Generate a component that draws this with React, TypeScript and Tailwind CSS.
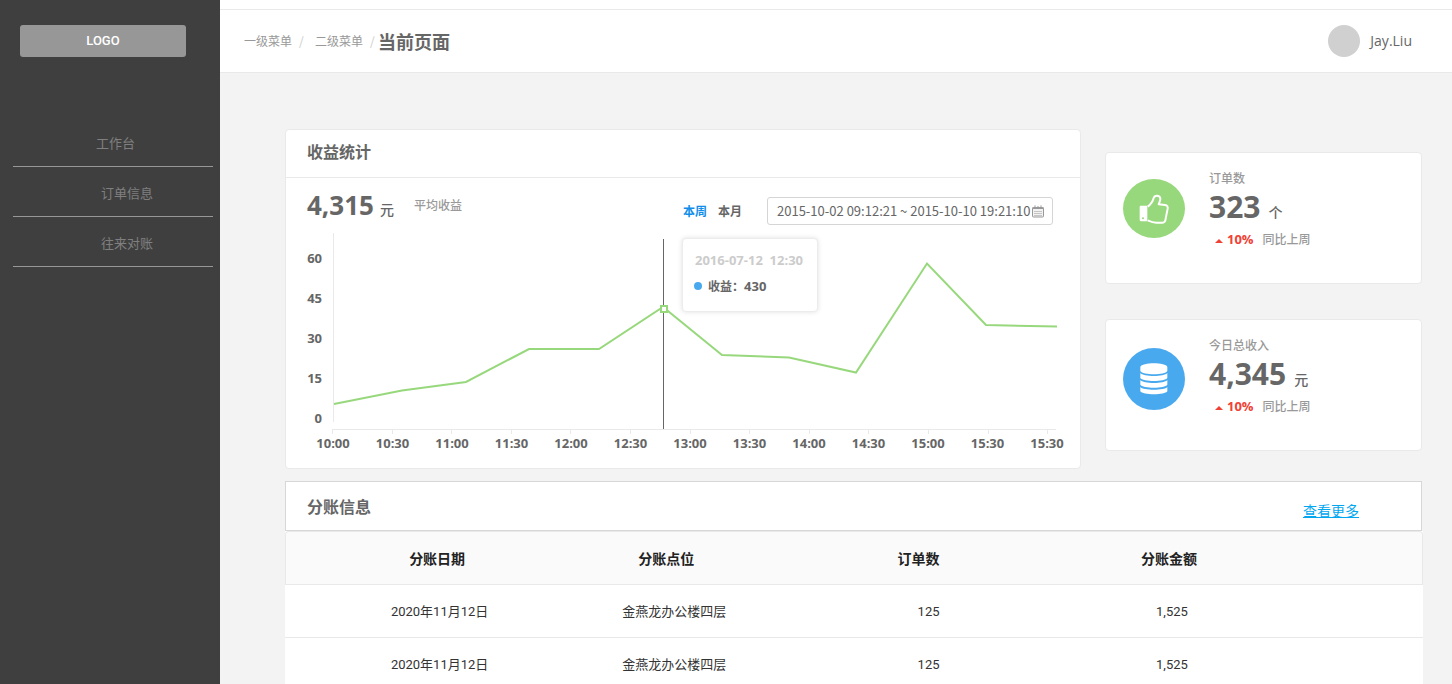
import type { ReactNode } from 'react'
import clsx from 'clsx'

const menuItems = [
  { label: '工作台', indent: 'pl-[83px]' },
  { label: '订单信息', indent: 'pl-[88px]' },
  { label: '往来对账', indent: 'pl-[88px]' },
]

const yLabels = ['60', '45', '30', '15', '0']

const xLabels = ['10:00', '10:30', '11:00', '11:30', '12:00', '12:30', '13:00', '13:30', '14:00', '14:30', '15:00', '15:30', '15:30']

const linePoints = '2,171 70,157.5 134,149 197,116 267,116 331,74 390,122 457,124.5 524,139.5 595,30.5 654,92 725,93.5'

const rows = [
  { date: '2020年11月12日', place: '金燕龙办公楼四层', orders: '125', amount: '1,525' },
  { date: '2020年11月12日', place: '金燕龙办公楼四层', orders: '125', amount: '1,525' },
]

function ThumbIcon() {
  return (
    <svg viewBox="130 160 90 90" className="size-[30px]" aria-hidden="true">
      <path d="M135 195h20v47h-18q-5 0-5-5v-38q0-4 3-4z" fill="#fff" />
      <circle cx="142" cy="233" r="3" fill="#98d87d" />
      <path
        d="M156 198C166 191 171 183 174 172C177 162 192 163 194 173C195 179 191 185 189 191L208 193C215 194 217 198 216 204L209 239C208 244 205 246 199 246L182 246C172 246 165 243 156 239"
        fill="none"
        stroke="#fff"
        strokeWidth="6"
        strokeLinejoin="round"
      />
    </svg>
  )
}

function CoinsIcon() {
  return (
    <svg viewBox="137 158 84 96" className="h-8 w-7" fill="#fff" aria-hidden="true">
      <path d="M138 170C142 155 215 155 219 170V182C212 195 145 195 138 182Z" />
      <path d="M138 188C147 200 210 200 219 188V203C212 215 145 215 138 203Z" />
      <path d="M138 209C147 221 210 221 219 209V223C212 235 145 235 138 223Z" />
      <path d="M138 230C147 241 210 241 219 230V243C212 255 145 255 138 243Z" />
    </svg>
  )
}

function CalendarIcon() {
  return (
    <svg viewBox="0 0 12 13" className="h-[13px] w-3 shrink-0" aria-hidden="true">
      <rect x="0.5" y="2.5" width="11" height="9.5" rx="0.8" fill="#f2f2f2" stroke="#999" />
      <path d="M0.5 3.2h11" stroke="#999" strokeWidth="1.6" />
      <path d="M3 0.4v3M6 1v2M9 0.4v3" stroke="#999" />
      <path d="M2.5 6.5h7.4M2.5 8.5h7.4M2.5 10.5h7.4" stroke="#999" strokeDasharray="1 1" />
    </svg>
  )
}

function Sidebar() {
  return (
    <aside className="w-[220px] shrink-0 bg-[#3f3f3f]">
      <div className="mt-[25px] ml-5 flex h-8 w-[166px] items-center justify-center rounded-[3px] bg-[#979797] font-[Roboto] text-[13px] font-medium text-white">
        LOGO
      </div>
      <nav className="mt-[60px] mr-[7px] ml-[13px]">
        {menuItems.map((item) => (
          <a
            key={item.label}
            href="#"
            className={clsx('flex h-[50px] items-center border-b border-[#979797] pt-[2px] text-[13px] text-[#7f7f7f]', item.indent)}
          >
            {item.label}
          </a>
        ))}
      </nav>
    </aside>
  )
}

function Header() {
  return (
    <header className="border-b border-[#e9e9e9] bg-white pt-[9px]">
      <div className="box-content flex h-[62px] items-center justify-between border-t border-[#e9e9e9] pr-10 pl-6">
        <div className="flex items-center text-xs text-[#999]">
          <a href="#">一级菜单</a>
          <span className="w-[23px] pl-[7px] text-[#ccc]">/</span>
          <a href="#">二级菜单</a>
          <span className="w-[15px] pl-[7px] text-[#ccc]">/</span>
          <h1 className="text-lg font-bold text-[#666]">当前页面</h1>
        </div>
        <div className="flex items-center gap-[10px]">
          <div className="size-8 rounded-full bg-[#d0d0d0]" />
          <span className="font-['Open_Sans'] text-sm text-[#666]">Jay.Liu</span>
        </div>
      </div>
    </header>
  )
}

function Chart() {
  return (
    <div className="mt-2 pb-4">
      <div className="flex h-[201px] pr-[23px] pl-[21px]">
        <div className="w-[15px] pt-[5px] text-right font-['Open_Sans'] text-[13px] font-bold">
          {yLabels.map((label) => (
            <div key={label} className="h-10 leading-10">{label}</div>
          ))}
        </div>
        <div className="relative ml-[10px] grow">
          <svg viewBox="0 0 725 201" preserveAspectRatio="none" className="h-full w-full" aria-hidden="true">
            <path d="M1.5 0V189M0 196.5H724" stroke="#e9e9e9" fill="none" />
            {xLabels.map((_, i) => (
              <path key={i} d={`M${Math.round(i * 59.6) + 0.5} 197v4`} stroke="#e9e9e9" />
            ))}
            <path d="M331.5 6V196" stroke="#666" />
            <polyline points={linePoints} fill="none" stroke="#98d87d" strokeWidth="2" />
            <rect x="329" y="73" width="6" height="6" fill="#fff" stroke="#98d87d" strokeWidth="2" />
          </svg>
          {/* Tooltip */}
          <div className="absolute top-[5px] left-[350px] h-[74px] w-[136px] rounded-[4px] border border-[#ececec] bg-white pt-[11px] pl-3 text-[13px] font-bold shadow-[0_0_5px_rgba(0,0,0,0.12)]">
            <div className="font-['Open_Sans'] leading-5 whitespace-pre text-[#ccc]">2016-07-12  12:30</div>
            <div className="mt-1 flex items-center leading-6">
              <span className="-ml-px mr-[6px] size-2 rounded-full bg-[#49a9ee]" />
              <span className="text-xs">收益：</span>
              <span className="font-['Open_Sans']">430</span>
            </div>
          </div>
        </div>
      </div>
      <div className="mr-[13px] ml-[27px] flex h-[18px] justify-between font-['Open_Sans'] text-[13px] leading-[18px] font-bold">
        {xLabels.map((label, i) => (
          <span key={i} className="w-10 text-center">{label}</span>
        ))}
      </div>
    </div>
  )
}

function RevenueCard() {
  return (
    <section className="grow rounded-[4px] border border-[#e9e9e9] bg-white text-[#666]">
      <h2 className="h-12 border-b border-[#e9e9e9] px-[21px] text-base leading-[42px] font-bold">收益统计</h2>
      <div className="mt-[19px] flex h-7 items-center pr-[27px] pl-[21px]">
        <div className="-mt-3 flex items-baseline font-['Open_Sans','Noto_Sans_CJK_SC',sans-serif]">
          <span className="text-[26px] leading-8 font-bold">4,315</span>
          <span className="ml-[6px] text-sm font-medium">元</span>
        </div>
        <span className="-mt-3 ml-5 text-xs font-medium text-[#999]">平均收益</span>
        <div className="ml-auto flex gap-[11px] text-xs font-bold">
          <button type="button" className="text-[#108ee9]">本周</button>
          <button type="button">本月</button>
        </div>
        <label className="ml-[25px] flex h-7 w-[286px] items-center rounded-[3px] border border-[#d5d5d5] pr-2 pl-[9px]">
          <input
            type="text"
            aria-label="日期范围"
            readOnly
            value="2015-10-02 09:12:21 ~ 2015-10-10 19:21:10"
            className="min-w-0 grow bg-transparent text-[13px] outline-none"
          />
          <CalendarIcon />
        </label>
      </div>
      <Chart />
    </section>
  )
}

type StatCardProps = {
  icon: ReactNode
  iconClass: string
  label: string
  value: string
  unit: string
}

function StatCard({ icon, iconClass, label, value, unit }: StatCardProps) {
  return (
    <section className="flex h-[132px] rounded-[4px] border border-[#e9e9e9] bg-white pl-[17px]">
      <div className={clsx('flex w-[62px] shrink-0 items-center justify-center rounded-[50%]', iconClass)}>{icon}</div>
      <div className="ml-6 pt-4">
        <div className="text-xs leading-[18px] font-medium text-[#999]">{label}</div>
        <div className="flex items-baseline font-['Open_Sans','Noto_Sans_CJK_SC',sans-serif] text-[#666]">
          <span className="text-[30px] leading-10 font-bold">{value}</span>
          <span className="ml-2 text-sm font-medium">{unit}</span>
        </div>
        <div className="mt-[2px] flex items-center pl-[6px] leading-5">
          <svg viewBox="0 0 8 4" className="mt-1 mr-1 h-1 w-2" aria-hidden="true">
            <path d="M4 0L8 4H0z" fill="#f04134" />
          </svg>
          <span className="font-['Open_Sans'] text-[13px] font-bold text-[#f04134]">10%</span>
          <span className="ml-[9px] text-xs font-medium text-[#999]">同比上周</span>
        </div>
      </div>
    </section>
  )
}

function SettlementTable() {
  return (
    <section className="mt-3">
      <div className="mr-px flex h-[50px] items-center justify-between border border-[#d7d7d7] bg-white pr-[62px] pl-[21px]">
        <h2 className="text-base font-bold text-[#666]">分账信息</h2>
        <a href="#" className="pt-2 text-sm text-[#02a7f0] underline">查看更多</a>
      </div>
      <table className="w-full table-fixed border-separate border-spacing-0 bg-white text-center">
        <thead>
          <tr className="h-[54px] bg-[#fafafa] text-sm text-[#222]">
            <th className="w-[27%] rounded-tl-[4px] border-y border-l border-[#e9e9e9] pr-1 font-bold">分账日期</th>
            <th className="w-[13%] border-y border-[#e9e9e9] font-bold">分账点位</th>
            <th className="w-[31%] border-y border-[#e9e9e9] pl-1 font-bold">订单数</th>
            <th className="w-[13%] border-y border-[#e9e9e9] pl-1 font-bold">分账金额</th>
            <th className="rounded-tr-[4px] border-y border-r border-[#e9e9e9]" />
          </tr>
        </thead>
        <tbody className="font-[Roboto,'Noto_Sans_CJK_SC',sans-serif] text-[13px] text-[#333]">
          {rows.map((row, i) => (
            <tr key={i} className="h-[53px]">
              <td className="border-b border-[#e9e9e9] pt-[2px] pl-[2px]">{row.date}</td>
              <td className="border-b border-[#e9e9e9] pt-[2px] pl-4 whitespace-nowrap">{row.place}</td>
              <td className="border-b border-[#e9e9e9] pt-[2px] pl-6">{row.orders}</td>
              <td className="border-b border-[#e9e9e9] pt-[2px] pl-[10px]">{row.amount}</td>
              <td className="border-b border-[#e9e9e9]" />
            </tr>
          ))}
        </tbody>
      </table>
    </section>
  )
}

export default function App() {
  return (
    <div className="flex h-screen overflow-hidden bg-[#f3f3f3] font-['Noto_Sans_CJK_SC',sans-serif]">
      <Sidebar />
      <div className="min-w-0 grow">
        <Header />
        <main className="pt-14 pr-[29px] pl-[65px]">
          <div className="mr-px flex gap-6">
            <RevenueCard />
            <div className="flex w-[317px] shrink-0 flex-col gap-[35px] pt-[23px]">
              <StatCard icon={<ThumbIcon />} iconClass="mt-[26px] h-[59px] bg-[#98d87d]" label="订单数" value="323" unit="个" />
              <StatCard icon={<CoinsIcon />} iconClass="mt-7 h-[62px] bg-[#49a9ee]" label="今日总收入" value="4,345" unit="元" />
            </div>
          </div>
          <SettlementTable />
        </main>
      </div>
    </div>
  )
}
